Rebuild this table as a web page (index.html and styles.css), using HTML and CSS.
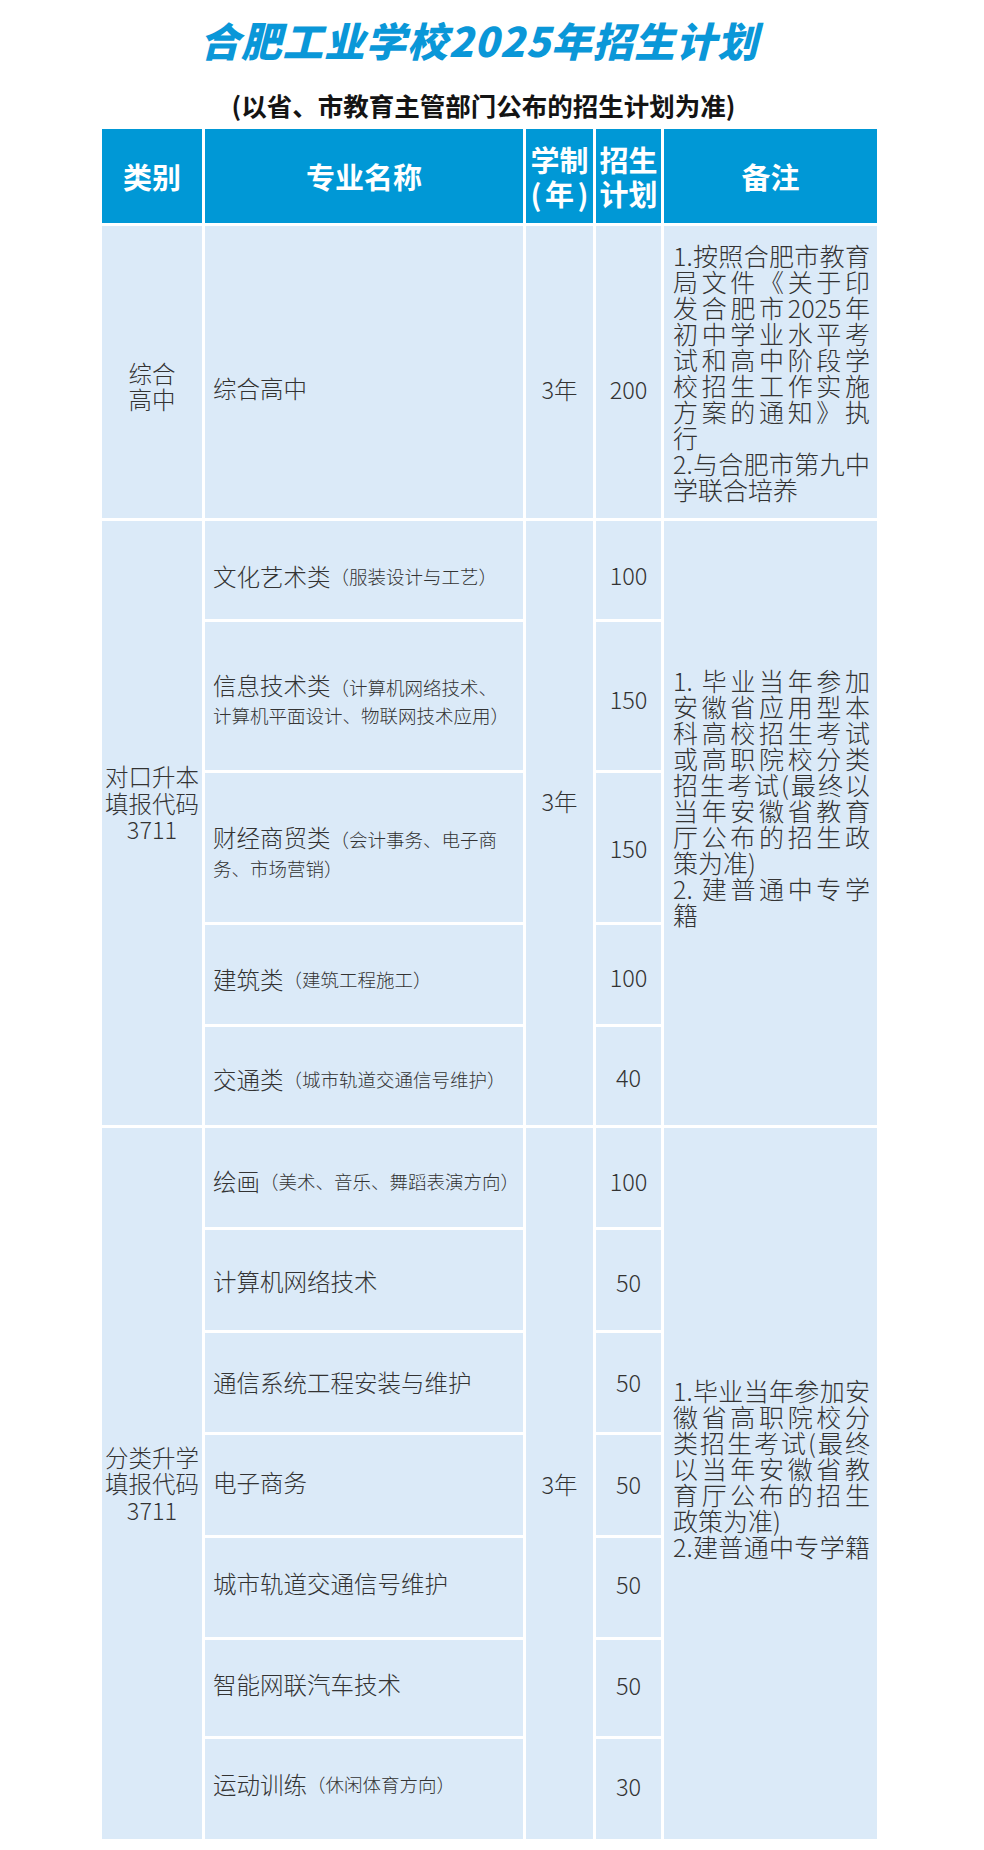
FILE: index.html
```html
<!DOCTYPE html>
<html lang="zh-CN">
<head>
<meta charset="utf-8">
<title>合肥工业学校2025年招生计划</title>
<link rel="stylesheet" href="styles.css">
</head>
<body>
<div class="page">
  <h1 class="title">合肥工业学校2025年招生计划</h1>
  <p class="subtitle">(以省、市教育主管部门公布的招生计划为准)</p>

  <div class="plan">
    <div class="cell head">类别</div>
    <div class="cell head">专业名称</div>
    <div class="cell head"><span class="stack"><span>学制</span><span>(年)</span></span></div>
    <div class="cell head"><span class="stack"><span>招生</span><span>计划</span></span></div>
    <div class="cell head">备注</div>

    <!-- 综合高中 -->
    <div class="cell cat pt28">综合<br>高中</div>
    <div class="cell name pt32">综合高中</div>
    <div class="cell yr pt34">3年</div>
    <div class="cell num pt34">200</div>
    <div class="cell note">
      <span class="j">1.按照合肥市教育</span>
      <span class="j">局文件《关于印</span>
      <span class="j">发合肥市2025年</span>
      <span class="j">初中学业水平考</span>
      <span class="j">试和高中阶段学</span>
      <span class="j">校招生工作实施</span>
      <span class="j">方案的通知》执</span>
      <span>行</span>
      <span class="j">2.与合肥市第九中</span>
      <span>学联合培养</span>
    </div>

    <!-- 对口升本 -->
    <div class="cell cat span5 pb40">对口升本<br>填报代码<br>3711</div>
    <div class="cell name pt12">文化艺术类<span class="sub">（服装设计与工艺）</span></div>
    <div class="cell yr span5 pb44">3年</div>
    <div class="cell num pt10">100</div>
    <div class="cell note span5 pb52">
      <span class="j">1. 毕业当年参加</span>
      <span class="j">安徽省应用型本</span>
      <span class="j">科高校招生考试</span>
      <span class="j">或高职院校分类</span>
      <span class="j">招生考试(最终以</span>
      <span class="j">当年安徽省教育</span>
      <span class="j">厅公布的招生政</span>
      <span>策为准)</span>
      <span class="j">2. 建普通中专学</span>
      <span>籍</span>
    </div>
    <div class="cell name pt8"><span>信息技术类<span class="sub">（计算机网络技术、<br>计算机平面设计、物联网技术应用）</span></span></div>
    <div class="cell num pt6">150</div>
    <div class="cell name pt10"><span>财经商贸类<span class="sub">（会计事务、电子商<br>务、市场营销）</span></span></div>
    <div class="cell num pt2">150</div>
    <div class="cell name pt10">建筑类<span class="sub">（建筑工程施工）</span></div>
    <div class="cell num pt6">100</div>
    <div class="cell name pt6">交通类<span class="sub">（城市轨道交通信号维护）</span></div>
    <div class="cell num pt2">40</div>

    <!-- 分类升学 -->
    <div class="cell cat span7">分类升学<br>填报代码<br>3711</div>
    <div class="cell name pt8">绘画<span class="sub">（美术、音乐、舞蹈表演方向）</span></div>
    <div class="cell yr span7 pt2">3年</div>
    <div class="cell num pt8">100</div>
    <div class="cell note span7 pb32">
      <span class="j">1.毕业当年参加安</span>
      <span class="j">徽省高职院校分</span>
      <span class="j">类招生考试(最终</span>
      <span class="j">以当年安徽省教</span>
      <span class="j">育厅公布的招生</span>
      <span>政策为准)</span>
      <span class="j">2.建普通中专学籍</span>
    </div>
    <div class="cell name pt2">计算机网络技术</div>
    <div class="cell num pt4">50</div>
    <div class="cell name">通信系统工程安装与维护</div>
    <div class="cell num">50</div>
    <div class="cell name pb6">电子商务</div>
    <div class="cell num pb2">50</div>
    <div class="cell name pb8">城市轨道交通信号维护</div>
    <div class="cell num pb6">50</div>
    <div class="cell name pb8">智能网联汽车技术</div>
    <div class="cell num pb6">50</div>
    <div class="cell name pb10">运动训练<span class="sub">（休闲体育方向）</span></div>
    <div class="cell num pb6">30</div>
  </div>
</div>
</body>
</html>
```

FILE: styles.css
```css
html, body {
  margin: 0;
  padding: 0;
  background: #ffffff;
}

body {
  font-family: "Noto Sans CJK SC", "Noto Sans", sans-serif;
  color: #333333;
}

.page {
  width: 984px;
  padding-top: 15px;
}

.title {
  margin: 0;
  padding-right: 26px;
  text-align: center;
  font-size: 40.5px;
  line-height: 50px;
  font-weight: 900;
  font-style: italic;
  letter-spacing: 1px;
  color: #0a97d8;
}

.subtitle {
  margin: 25px 0 0;
  padding-right: 17px;
  text-align: center;
  font-size: 25.5px;
  line-height: 30px;
  font-weight: 700;
  color: #141414;
}

.plan {
  display: grid;
  grid-template-columns: 100px 318px 67px 65px 213px;
  grid-template-rows: 94px 292px 98px 148px 149px 99px 98px 99px 100px 99px 100px 99px 96px 100px;
  gap: 3px;
  margin: 9px 0 0 102px;
  width: 775px;
}

.cell {
  box-sizing: border-box;
  display: flex;
  align-items: center;
  background: #dbeaf8;
  color: #333333;
  font-size: 23.5px;
  line-height: 26.5px;
  font-weight: 300;
}

.head {
  justify-content: center;
  background: #0098d6;
  color: #ffffff;
  font-size: 29px;
  font-weight: 700;
  line-height: 34px;
}

.stack {
  display: flex;
  flex-direction: column;
  width: 58px;
}

.stack > span {
  text-align: justify;
  text-align-last: justify;
}

.cat {
  justify-content: center;
  text-align: center;
  padding-left: 2px;
  padding-right: 2px;
}

.name {
  padding-left: 8px;
}

.yr,
.num {
  justify-content: center;
}

.sub {
  font-size: 18.5px;
}

.note {
  flex-direction: column;
  justify-content: center;
  align-items: stretch;
  padding-left: 9px;
  padding-right: 7px;
  font-size: 25px;
  line-height: 26px;
}

.note > span {
  display: block;
  white-space: nowrap;
}

.note > .j {
  text-align: justify;
  text-align-last: justify;
}

.span5 { grid-row: span 5; }
.span7 { grid-row: span 7; }

.pt2 { padding-top: 2px; }
.pt4 { padding-top: 4px; }
.pt6 { padding-top: 6px; }
.pt8 { padding-top: 8px; }
.pt10 { padding-top: 10px; }
.pt12 { padding-top: 12px; }
.pt28 { padding-top: 28px; }
.pt32 { padding-top: 32px; }
.pt34 { padding-top: 34px; }

.pb2 { padding-bottom: 2px; }
.pb6 { padding-bottom: 6px; }
.pb8 { padding-bottom: 8px; }
.pb10 { padding-bottom: 10px; }
.pb32 { padding-bottom: 32px; }
.pb40 { padding-bottom: 40px; }
.pb44 { padding-bottom: 44px; }
.pb52 { padding-bottom: 52px; }
```
